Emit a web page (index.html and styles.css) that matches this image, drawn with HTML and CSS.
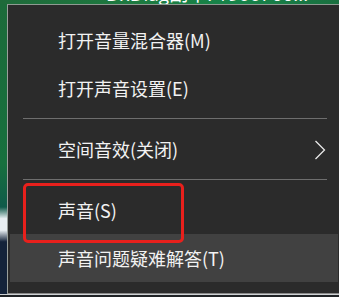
FILE: index.html
```html
<!DOCTYPE html>
<html lang="zh">
<head>
<meta charset="utf-8">
<link rel="stylesheet" href="styles.css">
</head>
<body>
<div class="top-strip"><span class="top-text">DxDiag副本: 1900766...</span></div>
<div class="main">
  <div class="left-strip"></div>
  <div class="menu">
    <div class="item">打开音量混合器(M)</div>
    <div class="item">打开声音设置(E)</div>
    <div class="sep"></div>
    <div class="item has-sub">空间音效(关闭)
      <svg class="chev" width="12" height="20" viewBox="0 0 12 20"><polyline points="1.5,1 10.5,10 1.5,19" fill="none" stroke="#e8e8e8" stroke-width="1.3"/></svg>
    </div>
    <div class="sep"></div>
    <div class="item">声音(S)</div>
    <div class="item hover">声音问题疑难解答(T)</div>
    <div class="highlight"></div>
  </div>
</div>
<div class="bottom-strip"></div>
</body>
</html>
```
FILE: styles.css
```css
html, body {
  margin: 0;
  padding: 0;
}
body {
  width: 339px;
  height: 297px;
  overflow: hidden;
  background: #1d1f22;
  font-family: "Noto Sans CJK SC", "Noto Sans", sans-serif;
}
.top-strip {
  height: 4px;
  overflow: hidden;
  background: linear-gradient(90deg, #1f6a3a 0%, #1d7a40 40%, #16844a 70%, #1a7040 100%);
  position: relative;
}
.top-text {
  display: block;
  margin-top: -16px;
  margin-left: 106px;
  font-size: 19px;
  line-height: 20px;
  color: #ffffff;
  font-family: "Open Sans", "Noto Sans CJK SC", sans-serif;
  white-space: nowrap;
}
.main {
  display: flex;
  height: 290px;
}
.left-strip {
  width: 7px;
  flex: none;
  background: linear-gradient(180deg, #1c6b3a 0%, #17703e 55%, #0f5a4a 70%, #e8eef2 74%, #e8eef2 78%, #14233a 82%, #14233a 100%);
}
.menu {
  position: relative;
  flex: 1;
  box-sizing: border-box;
  background: #2b2b2b;
  border-top: 1px solid #8f9a92;
  border-left: 1px solid #9aa09c;
  border-bottom: 1px solid #8a8a8a;
  padding: 11px 1px 11px 2px;
}
.item {
  height: 48px;
  display: flex;
  align-items: center;
  padding-left: 48px;
  color: #f2f2f2;
  font-size: 18px;
  position: relative;
}
.item.hover {
  background: #414141;
}
.has-sub .chev {
  position: absolute;
  right: 12px;
  top: 15px;
}
.sep {
  height: 1px;
  margin: 6px 11px 6px 13px;
  background: #6e6e6e;
}
.highlight {
  position: absolute;
  left: 15px;
  top: 178px;
  width: 155px;
  height: 54px;
  border: 3px solid #e8201c;
  border-radius: 5px;
}
.bottom-strip {
  height: 3px;
  background: #202326;
  border-top: 1px solid #cfd2d4;
  box-sizing: border-box;
}
```
